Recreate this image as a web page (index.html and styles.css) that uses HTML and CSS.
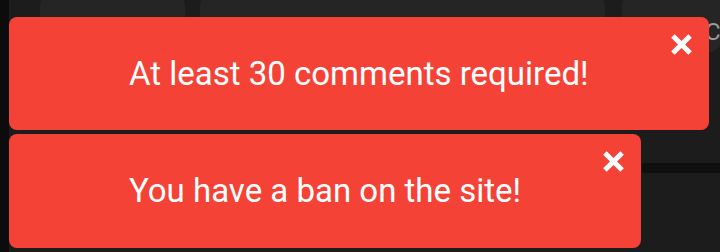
FILE: index.html
```html
<!DOCTYPE html>
<html lang="en">
<head>
<meta charset="utf-8">
<title>Notifications</title>
<link rel="stylesheet" href="styles.css">
</head>
<body>
<div class="page">
  <div class="sidebar"></div>
  <div class="main">
    <div class="tabs">
      <div class="tab tab-a"></div>
      <div class="tab tab-b"></div>
      <div class="tab tab-c"><span class="tab-label">C</span></div>
    </div>
    <div class="band"></div>
  </div>
</div>
<div class="toasts">
  <div class="toast">
    <span class="toast-text">At least 30 comments required!</span>
    <button class="toast-close" aria-label="Close">
      <svg viewBox="0 0 22 22" width="23" height="23"><path d="M2.8 2.8 L19.2 19.2 M19.2 2.8 L2.8 19.2" stroke="#fff" stroke-width="4.8" fill="none"/></svg>
    </button>
  </div>
  <div class="toast">
    <span class="toast-text">You have a ban on the site!</span>
    <button class="toast-close" aria-label="Close">
      <svg viewBox="0 0 22 22" width="23" height="23"><path d="M2.8 2.8 L19.2 19.2 M19.2 2.8 L2.8 19.2" stroke="#fff" stroke-width="4.8" fill="none"/></svg>
    </button>
  </div>
</div>
</body>
</html>
```
FILE: styles.css
```css
* { box-sizing: border-box; }
html, body {
  margin: 0;
  padding: 0;
  width: 720px;
  height: 252px;
  overflow: hidden;
  background: #1c1c1c;
  font-family: Roboto, "Noto Sans", Arial, sans-serif;
}
.page {
  display: flex;
  height: 252px;
}
.sidebar {
  width: 9px;
  flex: none;
  background: #0c0c0c;
}
.main {
  flex: 1;
  display: flex;
  flex-direction: column;
}
.tabs {
  display: flex;
  margin-top: -6px;
  height: 58px;
  padding-left: 31px;
}
.tab {
  background: #252525;
  border-radius: 12px;
  height: 100%;
}
.tab-a { width: 145px; }
.tab-b { width: 405px; margin-left: 15px; }
.tab-c {
  flex: 1;
  margin-left: 17px;
  padding-left: 83px;
  padding-top: 25px;
  color: #9a9a9a;
  font-size: 24px;
  line-height: 26px;
}
.band {
  margin-top: 111px;
  height: 10px;
  background: #101010;
}
.toasts {
  position: absolute;
  top: 17px;
  left: 9px;
  display: flex;
  flex-direction: column;
  align-items: flex-start;
  gap: 4px;
}
.toast {
  position: relative;
  background: #f44336;
  color: #fff;
  border-radius: 8px;
  padding: 37px 120px;
  font-size: 33px;
  line-height: 39px;
}
.toast:nth-child(2) { padding-bottom: 38px; }
.toast-text { display: block; white-space: nowrap; }
.toast-close {
  position: absolute;
  top: 16px;
  right: 16px;
  width: 23px;
  height: 23px;
  padding: 0;
  border: 0;
  background: none;
  display: flex;
}
```
